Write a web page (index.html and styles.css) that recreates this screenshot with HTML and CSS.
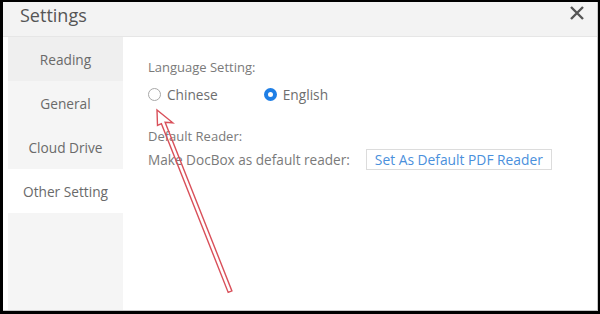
FILE: index.html
```html
<!DOCTYPE html>
<html>
<head>
<meta charset="utf-8">
<link rel="stylesheet" href="styles.css">
</head>
<body>
<div class="window">
  <div class="titlebar">
    <span class="title">Settings</span>
    <svg class="close" width="16" height="16" viewBox="0 0 16 16"><path d="M2 2 L14 14 M14 2 L2 14" stroke="#555" stroke-width="2.4" fill="none"/></svg>
  </div>
  <div class="main">
    <div class="strip"></div>
    <nav class="sidebar">
      <div class="item hover">Reading</div>
      <div class="item">General</div>
      <div class="item">Cloud Drive</div>
      <div class="item active">Other Setting</div>
    </nav>
    <section class="content">
      <div class="label">Language Setting:</div>
      <div class="radios">
        <span class="radio"><span class="dot"></span>Chinese</span>
        <span class="radio on"><span class="dot"></span>English</span>
      </div>
      <div class="label second">Default Reader:</div>
      <div class="row">
        <span class="label wide">Make DocBox as default reader:</span>
        <span class="btn">Set As Default PDF Reader</span>
      </div>
    </section>
  </div>
  <svg class="arrow" width="600" height="314" viewBox="0 0 600 314">
    <polygon points="157,110 157.5,125.5 161.4,123.7 228.2,292.4 231.9,290.9 165.1,122.2 172.8,122.8" fill="none" stroke="#d9505a" stroke-width="1.4" stroke-linejoin="miter"/>
  </svg>
</div>
</body>
</html>
```
FILE: styles.css
```css
html, body {
  margin: 0;
  padding: 0;
}
body {
  background: #000;
  width: 600px;
  height: 314px;
  overflow: hidden;
  font-family: "Open Sans", "Noto Sans", sans-serif;
}
.window {
  margin: 2px 2px 0 3px;
  width: 594px;
  height: 308px;
  background: #fff;
  border-right: 1px solid #c8c8c8;
  border-bottom: 1px solid #c8c8c8;
  display: flex;
  flex-direction: column;
}
.titlebar {
  height: 35px;
  background: #f3f3f3;
  border-bottom: 1px solid #e6e6e6;
  display: flex;
  align-items: center;
  justify-content: space-between;
  padding: 0 12px 0 17px;
  box-sizing: border-box;
  flex: none;
}
.title {
  font-size: 18px;
  color: #555;
  margin-top: -9px;
}
.close {
  margin-top: -13px;
}
.main {
  flex: 1;
  display: flex;
}
.strip {
  width: 5px;
  flex: none;
}
.sidebar {
  width: 115px;
  flex: none;
  background: #f5f5f5;
}
.item {
  height: 44px;
  display: flex;
  align-items: center;
  justify-content: center;
  font-size: 13.7px;
  color: #6a6a6a;
}
.item.hover {
  background: #efefef;
}
.item.active {
  background: #fff;
}
.content {
  flex: 1;
  padding: 21px 0 0 25px;
  font-size: 13px;
  color: #7a7a7a;
}
.label {
  line-height: 18px;
}
.label.wide {
  font-size: 13.6px;
}
.radios {
  display: flex;
  margin-top: 9px;
  height: 18px;
  align-items: center;
}
.radio {
  display: flex;
  align-items: center;
  font-size: 13.7px;
  color: #6e6e6e;
}
.radio + .radio {
  margin-left: 46px;
}
.dot {
  width: 11px;
  height: 11px;
  border: 1px solid #a8a8a8;
  border-radius: 50%;
  margin-right: 6px;
  box-sizing: content-box;
}
.radio.on .dot {
  width: 5px;
  height: 5px;
  border: 4px solid #1f7fe6;
  background: #fff;
  margin-right: 6px;
}
.second {
  margin-top: 24px;
}
.row {
  display: flex;
  align-items: center;
  margin-top: 4px;
}
.btn {
  margin-left: 16px;
  border: 1px solid #dcdcdc;
  padding: 0 8px;
  height: 19px;
  line-height: 19px;
  font-size: 13.8px;
  color: #4a90dc;
}
.arrow {
  position: absolute;
  left: 0;
  top: 0;
  pointer-events: none;
}
```
